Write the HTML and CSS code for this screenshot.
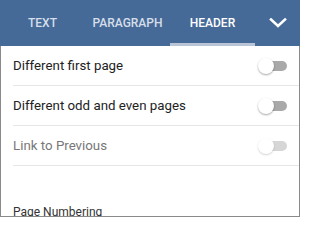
FILE: index.html
```html
<!DOCTYPE html>
<html>
<head>
<meta charset="utf-8">
<link rel="stylesheet" href="styles.css">
</head>
<body>
<div class="panel">
  <div class="tabs">
    <div class="tab">TEXT</div>
    <div class="tab">PARAGRAPH</div>
    <div class="tab active">HEADER</div>
    <div class="more">
      <svg width="18" height="12" viewBox="0 0 18 12"><path d="M2 2.5 L9 9 L16 2.5" fill="none" stroke="#fff" stroke-width="2.6" stroke-linecap="square"/></svg>
    </div>
  </div>
  <div class="content">
    <div class="row">
      <span class="label">Different first page</span>
      <span class="switch"><span class="track"></span><span class="knob"></span></span>
    </div>
    <div class="row">
      <span class="label">Different odd and even pages</span>
      <span class="switch"><span class="track"></span><span class="knob"></span></span>
    </div>
    <div class="row disabled">
      <span class="label">Link to Previous</span>
      <span class="switch"><span class="track"></span><span class="knob"></span></span>
    </div>
    <div class="section">Page Numbering</div>
  </div>
</div>
</body>
</html>
```
FILE: styles.css
```css
html, body {
  margin: 0;
  padding: 0;
  background: #fff;
}
body {
  width: 300px;
  height: 217px;
  overflow: hidden;
  font-family: Roboto, "Liberation Sans", sans-serif;
}
.panel {
  width: 300px;
  height: 217px;
  display: flex;
  flex-direction: column;
  box-sizing: border-box;
}
.tabs {
  height: 46px;
  flex: none;
  background: #456a97;
  display: flex;
}
.tab {
  width: 85px;
  box-sizing: border-box;
  display: flex;
  align-items: center;
  justify-content: center;
  font-size: 12px;
  font-weight: 500;
  color: #d5deea;
  border-bottom: 3px solid transparent;
  padding-top: 3px;
}
.tab.active {
  color: #fff;
  border-bottom-color: #b9c5d7;
}
.more {
  flex: 1;
  display: flex;
  align-items: center;
  justify-content: center;
  padding-bottom: 1px;
}
.content {
  flex: 1;
  border: 1px solid #8a8a8a;
  border-top: none;
  padding-left: 12px;
  overflow: hidden;
}
.row {
  height: 39px;
  display: flex;
  align-items: center;
  justify-content: space-between;
  border-bottom: 1px solid #e6e6e6;
  padding-right: 12px;
}
.label {
  font-size: 13.3px;
  color: #222;
}
.disabled .label {
  color: #777;
}
.switch {
  position: relative;
  width: 26px;
  height: 16px;
  display: block;
}
.track {
  position: absolute;
  left: 2px;
  right: 0;
  top: 3px;
  height: 10px;
  border-radius: 5px;
  background: #a9a9a9;
}
.disabled .track {
  background: #d6d6d6;
}
.knob {
  position: absolute;
  left: -3px;
  top: 0;
  width: 16px;
  height: 16px;
  border-radius: 50%;
  background: #fff;
  box-shadow: 0 1px 2px rgba(0,0,0,0.35);
}
.disabled .knob {
  box-shadow: 0 1px 2px rgba(0,0,0,0.18);
}
.section {
  padding-top: 39px;
  font-size: 12px;
  color: #333;
}
```
